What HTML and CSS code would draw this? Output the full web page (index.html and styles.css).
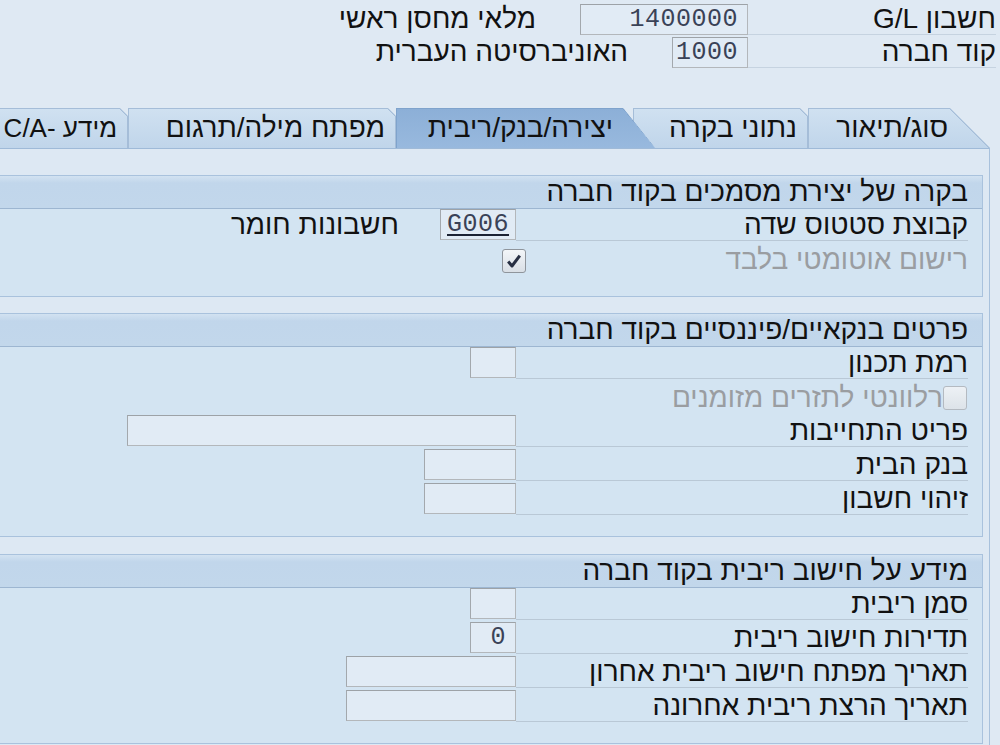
FILE: index.html
```html
<!DOCTYPE html>
<html lang="he" dir="rtl">
<head>
  <meta charset="UTF-8">
  <title>חשבון G/L - יצירה/בנק/ריבית</title>
  <link rel="stylesheet" href="styles.css">
</head>
<body>
  <div class="screen">
    <div class="head">
      <div class="head-row">
        <span class="head-label">חשבון G/L</span>
        <span class="field num w-gl">1400000</span>
        <span class="head-desc">מלאי מחסן ראשי</span>
      </div>
      <div class="head-row">
        <span class="head-label">קוד חברה</span>
        <span class="field num w-code">1000</span>
        <span class="head-desc">האוניברסיטה העברית</span>
      </div>
    </div>

    <div class="tabs">
      <div class="tab tab-slant w-t1">סוג/תיאור</div>
      <div class="tab w-t2">נתוני בקרה</div>
      <div class="tab tab-active w-t3">יצירה/בנק/ריבית</div>
      <div class="tab w-t4">מפתח מילה/תרגום</div>
      <div class="tab w-t5">מידע -C/A</div>
    </div>

    <div class="panel">
      <section class="group">
        <div class="group-title">בקרה של יצירת מסמכים בקוד חברה</div>
        <div class="row">
          <span class="label">קבוצת סטטוס שדה</span>
          <span class="field code w-code"><u>G006</u></span>
          <span class="desc">חשבונות חומר</span>
        </div>
        <div class="row">
          <span class="label label-off no-line">רישום אוטומטי בלבד</span>
          <span class="check check-in">
            <svg width="16" height="14" viewBox="0 0 16 14"><path d="M2.2 7.6 L6 12 L13.8 1.6" fill="none" stroke="#283044" stroke-width="3" stroke-linejoin="round"/></svg>
          </span>
        </div>
      </section>

      <section class="group">
        <div class="group-title">פרטים בנקאיים/פיננסיים בקוד חברה</div>
        <div class="row">
          <span class="label">רמת תכנון</span>
          <span class="field w-s"></span>
        </div>
        <div class="row">
          <span class="check check-off"></span>
          <span class="label-off">רלוונטי לתזרים מזומנים</span>
        </div>
        <div class="row">
          <span class="label">פריט התחייבות</span>
          <span class="field w-l"></span>
        </div>
        <div class="row">
          <span class="label">בנק הבית</span>
          <span class="field w-m"></span>
        </div>
        <div class="row">
          <span class="label">זיהוי חשבון</span>
          <span class="field w-m"></span>
        </div>
      </section>

      <section class="group">
        <div class="group-title">מידע על חישוב ריבית בקוד חברה</div>
        <div class="row">
          <span class="label">סמן ריבית</span>
          <span class="field w-s"></span>
        </div>
        <div class="row">
          <span class="label">תדירות חישוב ריבית</span>
          <span class="field num w-s">0</span>
        </div>
        <div class="row">
          <span class="label">תאריך מפתח חישוב ריבית אחרון</span>
          <span class="field w-d"></span>
        </div>
        <div class="row">
          <span class="label">תאריך הרצת ריבית אחרונה</span>
          <span class="field w-d"></span>
        </div>
      </section>
    </div>
  </div>
</body>
</html>
```

FILE: styles.css
```css
body {
  margin: 0;
  background: #dfe9f3;
  font-family: "Liberation Sans", Arial, "DejaVu Sans", sans-serif;
  font-size: 28px;
  color: #111;
  overflow: hidden;
}
.screen {
  width: 1000px;
  height: 745px;
  overflow: hidden;
}

/* header fields */
.head {
  display: flex;
  flex-direction: column;
  gap: 3px;
  padding: 4px 4px 0 0;
}
.head-row {
  display: flex;
  align-items: flex-start;
  height: 30px;
}
.head-label {
  width: 248px;
  height: 31px;
  line-height: 30px;
  box-sizing: border-box;
  border-bottom: 1px solid #c6d3e0;
  white-space: nowrap;
}
.head-desc {
  margin-right: 44px;
  line-height: 30px;
  white-space: nowrap;
}

/* input boxes */
.field {
  box-sizing: border-box;
  height: 31px;
  flex: none;
  direction: ltr;
  border: 1px solid #b3b7bb;
  border-top-color: #9da2a7;
  border-left-color: #a3a8ad;
  background: #e1ebf5;
  font-family: "Liberation Mono", "DejaVu Sans Mono", monospace;
  font-size: 25px;
  letter-spacing: 0.5px;
  line-height: 29px;
  color: #3a4257;
}
.num {
  text-align: right;
  padding-right: 9px;
}
.code {
  text-align: left;
  padding-left: 6px;
}
.code u {
  text-decoration-color: #1b2233;
  text-decoration-thickness: 1.5px;
  text-underline-offset: 3px;
}
.w-gl { width: 168px; }
.w-code { width: 76px; }
.w-s { width: 46px; }
.w-m { width: 92px; }
.w-d { width: 170px; }
.w-l { width: 389px; }

/* tab strip */
.tabs {
  display: flex;
  height: 40px;
  margin-top: 41px;
  padding-right: 10px;
}
.tab {
  flex: none;
  box-sizing: border-box;
  height: 40px;
  padding-right: 10px;
  line-height: 38px;
  white-space: nowrap;
  overflow: hidden;
  border: 1px solid #a5bdd8;
  border-bottom: none;
  background-origin: border-box;
  background-image:
    linear-gradient(225deg, transparent 5px, #a5bdd8 5px, #a5bdd8 6.5px, transparent 6.5px),
    linear-gradient(#d0e1f1, #c0d5ea);
  clip-path: polygon(0 0, calc(100% - 8px) 0, 100% 8px, 100% 100%, 0 100%);
}
.tab-slant {
  padding-right: 42px;
  border-right: none;
  background-image:
    linear-gradient(225deg, transparent 27.6px, #a5bdd8 27.6px, #a5bdd8 29px, transparent 29px),
    linear-gradient(#d0e1f1, #c0d5ea);
  clip-path: polygon(0 0, calc(100% - 40px) 0, 100% 100%, 0 100%);
}
.tab-active {
  position: relative;
  z-index: 1;
  margin-right: -22px;
  padding-right: 42px;
  border-color: #7fa3cc;
  border-right: none;
  background-image:
    linear-gradient(230.6deg, transparent 24px, #7fa3cc 24px, #7fa3cc 25.4px, transparent 25.4px),
    linear-gradient(#8cafd7, #98b9de);
  clip-path: polygon(0 0, calc(100% - 32px) 0, 100% 100%, 0 100%);
}
.w-t1 { width: 182px; }
.w-t2 { width: 175px; }
.w-t3 { width: 259px; }
.w-t4 { width: 268px; }
.w-t5 {
  width: 140px;
  font-size: 26px;
}

/* tab body */
.panel {
  margin-right: 10px;
  height: 600px;
  padding: 26px 6px 0 0;
  border-top: 1px solid #9fbad8;
  border-right: 1px solid #a8c1dc;
  background: #dde8f3;
}
.group {
  margin-left: -20px;
  margin-bottom: 16px;
  padding-bottom: 19px;
  border: 1px solid #a9c2dd;
  background: #d3e4f2;
}
.group + .group + .group {
  margin-top: 17px;
}
.group-title {
  box-sizing: border-box;
  height: 33px;
  padding-right: 14px;
  line-height: 32px;
  white-space: nowrap;
  border-bottom: 1px solid #9db6d1;
  background: linear-gradient(#d2e2f1, #c1d6eb 7px, #c2d7eb);
}
.row {
  display: flex;
  align-items: flex-start;
  height: 34px;
  padding-right: 14px;
}
.label {
  flex: none;
  box-sizing: border-box;
  width: 452px;
  height: 32px;
  line-height: 31px;
  white-space: nowrap;
  border-bottom: 1px solid #b9c8d6;
}
.no-line {
  border-bottom-color: transparent;
}
.label-off {
  color: #9a9da1;
  line-height: 33px;
  white-space: nowrap;
}
.desc {
  margin-right: 41px;
  line-height: 31px;
  white-space: nowrap;
}

/* checkboxes */
.check {
  flex: none;
  box-sizing: border-box;
  width: 24px;
  height: 24px;
  margin-top: 5px;
  display: flex;
  align-items: center;
  justify-content: center;
  border-radius: 3px;
}
.check-in {
  margin-right: -10px;
  margin-top: 6px;
  border: 1px solid #8f959c;
  background: linear-gradient(#f3f6f9, #d9dfe6);
}
.check-off {
  margin-right: 1px;
  border: 1px solid #b4bac1;
  background: linear-gradient(#edf1f5, #dde3e9);
}
```
